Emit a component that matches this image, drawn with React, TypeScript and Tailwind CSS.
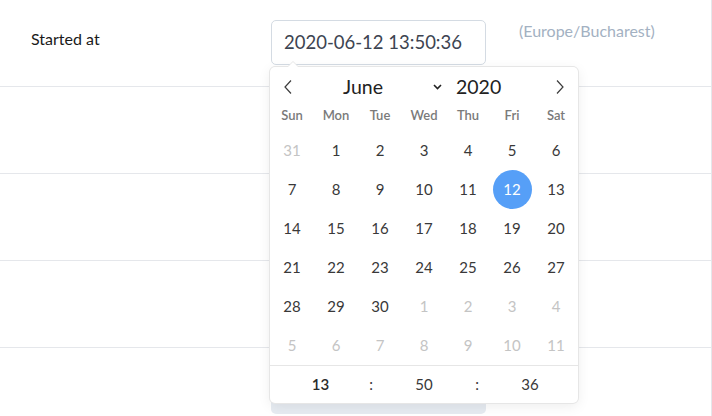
import React from "react";

const weekdays = ["Sun", "Mon", "Tue", "Wed", "Thu", "Fri", "Sat"];

type Day = { n: number; muted?: boolean; selected?: boolean };

const days: Day[] = [
  { n: 31, muted: true },
  ...Array.from({ length: 30 }, (_, i) => ({ n: i + 1, selected: i + 1 === 12 })),
  ...Array.from({ length: 11 }, (_, i) => ({ n: i + 1, muted: true })),
];

function Calendar() {
  return (
    <div className="absolute left-[270px] top-[67px] w-[308px] rounded-[5px] bg-white shadow-[1px_0_0_#e6e6e6,-1px_0_0_#e6e6e6,0_1px_0_#e6e6e6,0_-1px_0_#e6e6e6,0_3px_13px_rgba(0,0,0,0.08)]">
      {/* arrow */}
      <div className="absolute left-[17px] top-[-6px] h-0 w-0 border-x-[6px] border-b-[6px] border-x-transparent border-b-[#e6e6e6]" />
      <div className="absolute left-[18px] top-[-5px] h-0 w-0 border-x-[5px] border-b-[5px] border-x-transparent border-b-white" />

      <div className="relative h-[34px] text-[#222]">
        <svg className="absolute left-[13px] top-[12px]" width="10" height="16" viewBox="0 0 10 16" fill="none">
          <path d="M8 1.5 L2 8 L8 14.5" stroke="#3c3c3c" strokeWidth="1.2" />
        </svg>
        <svg className="absolute right-[13px] top-[12px]" width="10" height="16" viewBox="0 0 10 16" fill="none">
          <path d="M2 1.5 L8 8 L2 14.5" stroke="#3c3c3c" strokeWidth="1.2" />
        </svg>
        <span className="absolute left-[73px] top-[8px] text-[19.5px] leading-[24px]">June</span>
        <svg className="absolute left-[163px] top-[17px]" width="9" height="6" viewBox="0 0 9 6" fill="none">
          <path d="M1 1 L4.5 4.5 L8 1" stroke="#222" strokeWidth="1.6" />
        </svg>
        <span className="absolute left-[186px] top-[8px] text-[19.5px] leading-[24px]">2020</span>
      </div>

      <div className="grid h-[30px] grid-cols-7 items-center text-center text-[13px] font-semibold text-[#7a7a7a]">
        {weekdays.map((w) => (
          <span key={w}>{w}</span>
        ))}
      </div>

      <div className="grid grid-cols-7">
        {days.map((d, i) => (
          <div key={i} className="flex h-[39px] items-center justify-center">
            <span
              className={
                d.selected
                  ? "flex h-[39px] w-[39px] items-center justify-center rounded-full bg-[#569ff7] text-[15px] text-white"
                  : d.muted
                  ? "text-[15px] text-[#c4c4c4]"
                  : "text-[15px] text-[#393939]"
              }
            >
              {d.n}
            </span>
          </div>
        ))}
      </div>

      <div className="grid h-[38px] grid-cols-[1fr_10px_1fr_10px_1fr] items-center border-t border-[#e6e6e6] text-center text-[15px] text-[#393939]">
        <span className="pl-[5px] font-semibold text-[#2a2a2a]">13</span>
        <span>:</span>
        <span>50</span>
        <span>:</span>
        <span>36</span>
      </div>
    </div>
  );
}

export default function App() {
  return (
    <div className="relative h-[416px] w-[712px] overflow-hidden bg-white font-['Lato',sans-serif]">
      <div className="w-[712px] border-r border-[#e5e7eb]">
        <div className="flex h-[87px] border-b border-[#e5e7eb]">
          <div className="w-[271px] pl-[31px] pt-[27px] text-[16px] text-[#1a1a1a]">Started at</div>
          <div className="pt-[20px]">
            <div className="flex h-[45px] w-[215px] items-center rounded-[5px] border border-[#d4dbe3] bg-white px-[12px] text-[18.5px] text-[#3d4451]">
              2020-06-12 13:50:36
            </div>
          </div>
          <div className="pl-[33px] pt-[19px] text-[16px] text-[#a3b1c2]">(Europe/Bucharest)</div>
        </div>
        <div className="h-[87px] border-b border-[#e5e7eb]" />
        <div className="h-[87px] border-b border-[#e5e7eb]" />
        <div className="h-[87px] border-b border-[#e5e7eb]" />
        <div className="flex h-[80px]">
          <div className="ml-[271px] mt-[21px] h-[45px] w-[215px] rounded-[5px] bg-[#e6ebf1]" />
        </div>
      </div>
      <Calendar />
    </div>
  );
}
